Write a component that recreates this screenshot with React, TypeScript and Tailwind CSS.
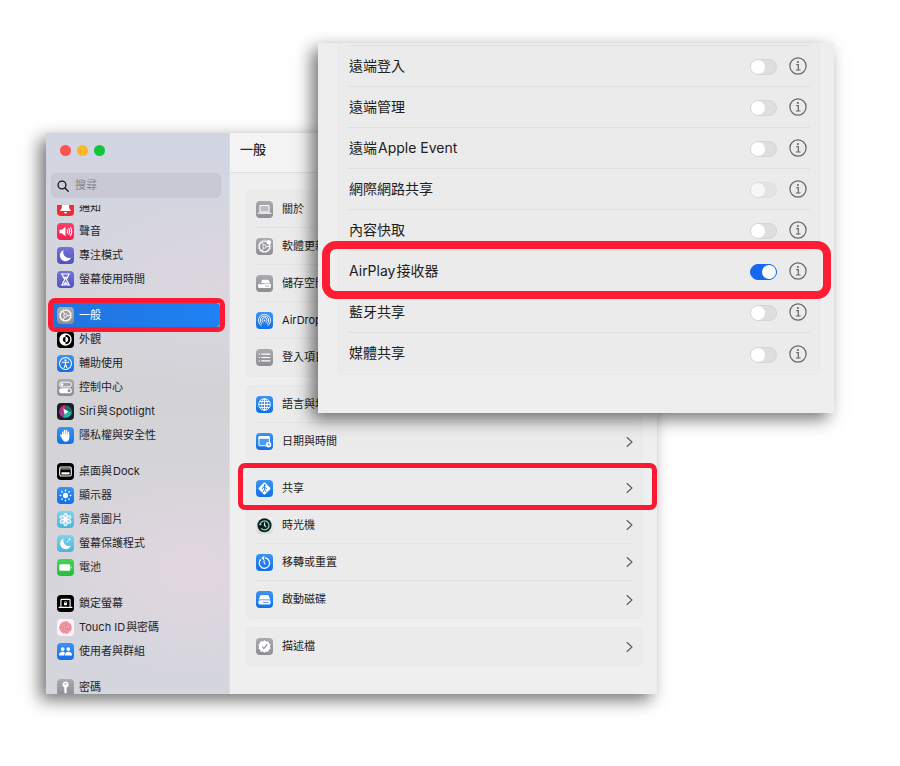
import { useState, type ReactNode } from "react";

type Item = { name: string; tile: string; art: ReactNode };

const BLUE = "bg-linear-to-b from-[#3b93f4] to-[#0f6fe6]";
const GRAY = "bg-linear-to-b from-[#ababaf] to-[#8e8e92]";
const BLACK = "bg-black";
const INDIGO = "bg-linear-to-b from-[#7573d8] to-[#5351bd]";
const SKY = "bg-linear-to-b from-[#7fd3ea] to-[#4bb4dc]";

const gear = (
  <g fill="none" stroke="#fff">
    <circle cx="10" cy="10" r="6.2" strokeWidth="1.4" />
    <circle cx="10" cy="10" r="7.4" strokeWidth="1" strokeDasharray="1 0.94" />
    <circle cx="10" cy="10" r="2" strokeWidth="1" />
    <path d="M12 10h4M9 8.3 7 4.8M9 11.7l-2 3.5" strokeWidth="1.1" />
  </g>
);

const sidebar: Item[][] = [
  [
    {
      name: "通知",
      tile: "bg-[#f02d33]",
      art: (
        <path fill="#fff" d="M10 3.500c-2.800 0-4.200 2-4.200 4.500 0 2.800-.6 4-2 5.300v.9h12.400v-.9c-1.400-1.300-2-2.500-2-5.300 0-2.500-1.400-4.500-4.200-4.500zM8.200 15.200a1.800 1.800 0 0 0 3.600 0z" />
      ),
    },
    {
      name: "聲音",
      tile: "bg-linear-to-b from-[#fb4069] to-[#ee1f50]",
      art: (
        <g>
          <path fill="#fff" d="M3 8v4h2.600L10 15.500v-11L5.600 8z" />
          <path fill="none" stroke="#fff" strokeWidth="1.200" strokeLinecap="round" d="M12 8q1.200 2 0 4M13.900 6.500q2.200 3.500 0 7M15.800 5q3 5 0 10" />
        </g>
      ),
    },
    {
      name: "專注模式",
      tile: INDIGO,
      art: <path fill="#fff" d="M8 3.500a6.800 6.800 0 1 0 8.600 8.800A6.600 6.600 0 0 1 8 3.500z" />,
    },
    {
      name: "螢幕使用時間",
      tile: INDIGO,
      art: (
        <g fill="none" stroke="#fff" strokeWidth="1.400" strokeLinecap="round">
          <path d="M5 3.500h10M5 16.500h10" />
          <path d="M6.300 3.500c0 3.500 2.600 4.500 2.600 6.500s-2.600 3-2.600 6.500M13.700 3.500c0 3.500-2.600 4.500-2.600 6.500s2.600 3 2.600 6.500" />
          <path d="M8 7h4l-2 2.500zM7.500 15.500 10 12.500l2.500 3z" fill="#fff" strokeWidth="0.500" />
        </g>
      ),
    },
  ],
  [
    { name: "一般", tile: GRAY, art: gear },
    {
      name: "外觀",
      tile: BLACK,
      art: (
        <g>
          <circle cx="10" cy="10" r="6.500" fill="none" stroke="#fff" strokeWidth="1.600" />
          <path fill="#fff" d="M10 3.500a6.500 6.500 0 0 0 0 13v-3.400a3.100 3.100 0 0 1 0-6.200z" />
          <path fill="#fff" d="M10 6.900a3.100 3.100 0 0 1 0 6.200z" />
        </g>
      ),
    },
    {
      name: "輔助使用",
      tile: BLUE,
      art: (
        <g fill="none" stroke="#fff" strokeLinecap="round">
          <circle cx="10" cy="10" r="7" strokeWidth="1.200" />
          <circle cx="10" cy="6.300" r="1.300" fill="#fff" stroke="none" />
          <path d="M6.400 8.600h7.200M10 8.600v2.600M10 11.200l-1.500 3.500M10 11.200l1.500 3.500" strokeWidth="1.300" />
        </g>
      ),
    },
    {
      name: "控制中心",
      tile: GRAY,
      art: (
        <g>
          <rect x="3" y="3.800" width="14" height="5.400" rx="2.700" fill="none" stroke="#fff" strokeWidth="1.100" />
          <circle cx="5.900" cy="6.500" r="1.600" fill="#fff" />
          <rect x="2.600" y="10.800" width="14.800" height="6" rx="3" fill="#fff" />
          <circle cx="14.200" cy="13.800" r="1.700" fill="#8e8e92" />
        </g>
      ),
    },
    {
      name: "Siri與Spotlight",
      tile: "bg-[#1c1c2c]",
      art: (
        <g>
          <path d="M10 2.500A7.500 7.500 0 0 0 2.800 8c2 .5 4 1 7.200 2z" fill="#c93468" />
          <path d="M2.800 8A7.500 7.500 0 0 0 7 16.800L10 10z" fill="#a83a94" />
          <path d="M10 2.500a7.500 7.500 0 0 1 7.500 7.500L10 10z" fill="#1f6f6c" />
          <path d="M17.500 10A7.500 7.500 0 0 1 7 16.800L10 10z" fill="#27b6a4" />
          <path d="M7.500 6.500 13.500 10l-4.500 3.500z" fill="#fff" />
        </g>
      ),
    },
    {
      name: "隱私權與安全性",
      tile: BLUE,
      art: (
        <g fill="none" stroke="#fff" strokeWidth="1.700" strokeLinecap="round">
          <path d="M6.700 10.500V6M8.900 9.500V4M11.200 9.500V4M13.400 10.500V6" />
          <path d="M4.300 9.500 6.800 13" />
          <path fill="#fff" strokeWidth="1" d="M6.200 9h7.800v3.500c0 3-1.600 4.300-3.700 4.300s-3-.8-4.100-3.300z" />
        </g>
      ),
    },
  ],
  [
    {
      name: "桌面與Dock",
      tile: BLACK,
      art: (
        <g>
          <rect x="3.200" y="4.700" width="13.600" height="10.600" rx="1.800" fill="none" stroke="#fff" strokeWidth="1.300" />
          <rect x="5.200" y="10.800" width="9.600" height="2.600" rx="0.600" fill="#fff" />
          <path d="M4 7h12" stroke="#fff" strokeWidth="0.900" />
        </g>
      ),
    },
    {
      name: "顯示器",
      tile: BLUE,
      art: (
        <g stroke="#fff" strokeWidth="1.700" strokeLinecap="round">
          <circle cx="10" cy="10" r="3.100" fill="#fff" stroke="none" />
          <path d="M10 3.800v.5M10 15.700v.5M3.800 10h.5M15.700 10h.5M5.600 5.600l.4.400M14 14l.4.400M5.600 14.400l.4-.4M14 6l.4-.4" />
        </g>
      ),
    },
    {
      name: "背景圖片",
      tile: SKY,
      art: (
        <g fill="#ffffff55" stroke="#fff" strokeWidth="1.200">
          <ellipse cx="10" cy="5.700" rx="1.900" ry="2.700" />
          <ellipse cx="10" cy="5.700" rx="1.900" ry="2.700" transform="rotate(60 10 10)" />
          <ellipse cx="10" cy="5.700" rx="1.900" ry="2.700" transform="rotate(120 10 10)" />
          <ellipse cx="10" cy="5.700" rx="1.900" ry="2.700" transform="rotate(180 10 10)" />
          <ellipse cx="10" cy="5.700" rx="1.900" ry="2.700" transform="rotate(240 10 10)" />
          <ellipse cx="10" cy="5.700" rx="1.900" ry="2.700" transform="rotate(300 10 10)" />
          <circle cx="10" cy="10" r="1.600" fill="#fff" />
        </g>
      ),
    },
    {
      name: "螢幕保護程式",
      tile: SKY,
      art: (
        <g fill="#fff">
          <path d="M8 4a6.500 6.500 0 1 0 8.300 8.400A6.300 6.300 0 0 1 8 4z" />
          <circle cx="14.600" cy="5.200" r="1.100" />
          <circle cx="12.400" cy="8" r="0.800" />
        </g>
      ),
    },
    {
      name: "電池",
      tile: "bg-linear-to-b from-[#45d35a] to-[#23bd3c]",
      art: (
        <g fill="#fff">
          <rect x="2.600" y="6.200" width="13" height="7.600" rx="1.800" />
          <path d="M16.400 8.300q1.700 1.700 0 3.400z" />
        </g>
      ),
    },
  ],
  [
    {
      name: "鎖定螢幕",
      tile: BLACK,
      art: (
        <g fill="none" stroke="#fff" strokeWidth="1.300">
          <path d="M4.600 13.800V6.200q0-1 1-1h8.800q1 0 1 1v7.600" />
          <path d="M2.500 14.600h15" strokeLinecap="round" />
          <rect x="8.300" y="9.200" width="3.400" height="2.800" fill="#fff" stroke="none" />
          <path d="M9 9.500V8.600a1 1 0 0 1 2 0v.9" strokeWidth="0.800" />
        </g>
      ),
    },
    {
      name: "Touch ID與密碼",
      tile: "bg-[#fbf3f4]",
      art: (
        <g fill="none" stroke="#e8697d" strokeWidth="0.900">
          <circle cx="10" cy="10" r="6.800" fill="#f2a3ae" strokeDasharray="5 1" />
          <circle cx="10" cy="10" r="4.800" strokeDasharray="6 1" />
          <circle cx="10" cy="10" r="2.800" strokeDasharray="4 1" />
          <path d="M10 8.500v3.500" />
        </g>
      ),
    },
    {
      name: "使用者與群組",
      tile: BLUE,
      art: (
        <g fill="#fff">
          <circle cx="6.700" cy="7.200" r="2.200" />
          <circle cx="13.300" cy="7.200" r="2.200" />
          <path d="M2.300 14.600c0-3 1.800-4.400 4.200-4.400 1.400 0 2.400.5 3 1.400-.7.900-1 1.900-1 3z" />
          <path d="M9.300 14.600c0-3 1.700-4.400 4.100-4.400s4.300 1.400 4.300 4.400z" />
        </g>
      ),
    },
  ],
  [
    {
      name: "密碼",
      tile: GRAY,
      art: (
        <g>
          <path fill="#fff" d="M10 3a3.700 3.700 0 0 0-1.400 7.100v5.400L10 17.300l1.900-1.900-1.200-1.200 1.200-1.200-.9-1.200.5-1.700A3.700 3.700 0 0 0 10 3z" />
          <circle cx="10" cy="5.600" r="1" fill="#97979b" />
        </g>
      ),
    },
  ],
];

const general: Item[][] = [
  [
    {
      name: "關於",
      tile: GRAY,
      art: (
        <g>
          <rect x="4.600" y="5.200" width="10.800" height="7.800" rx="1" fill="#bdbdc1" stroke="#fff" strokeWidth="1.200" />
          <path d="M2.500 14.300h15" stroke="#fff" strokeWidth="1.300" strokeLinecap="round" />
        </g>
      ),
    },
    {
      name: "軟體更新",
      tile: GRAY,
      art: (
        <g>
          {gear}
          <circle cx="15" cy="5" r="2.600" fill="#fff" />
        </g>
      ),
    },
    {
      name: "儲存空間",
      tile: GRAY,
      art: (
        <g>
          <path fill="#fff" d="M7.200 5.500h6.600q1 0 1.400 1L16.500 9.600H6L7.200 5.500z" />
          <rect x="2.400" y="10.200" width="15.200" height="5.200" rx="1.500" fill="#fff" />
          <path d="M11 13h4.500M3 10.200h6" stroke="#97979b" strokeWidth="1" />
        </g>
      ),
    },
    {
      name: "AirDrop",
      tile: BLUE,
      art: (
        <g fill="none" stroke="#fff" strokeWidth="1.100" strokeLinecap="round">
          <path d="M6 16a7.200 7.200 0 1 1 8 0M7 13.900a5 5 0 1 1 6 0M8.300 12a2.900 2.900 0 1 1 3.400 0" />
          <circle cx="10" cy="9.800" r="1" fill="#fff" stroke="none" />
        </g>
      ),
    },
    {
      name: "登入項目",
      tile: GRAY,
      art: <path fill="none" stroke="#fff" strokeWidth="1.400" strokeLinecap="round" d="M3.800 6h.2M3.800 10h.2M3.800 14h.2M6.800 6h9.500M6.800 10h9.500M6.800 14h9.500" />,
    },
  ],
  [
    {
      name: "語言與地區",
      tile: BLUE,
      art: (
        <g fill="none" stroke="#fff" strokeWidth="1.100">
          <circle cx="10" cy="10" r="6.800" />
          <ellipse cx="10" cy="10" rx="3.200" ry="6.800" />
          <path d="M10 3.200v13.600M3.200 10h13.600M4.300 6.500h11.400M4.300 13.500h11.400" />
        </g>
      ),
    },
    {
      name: "日期與時間",
      tile: BLUE,
      art: (
        <g>
          <rect x="3.400" y="4.200" width="12.400" height="10.800" rx="1.600" fill="#4c9cf5" stroke="#fff" strokeWidth="1.200" />
          <path fill="#fff" d="M3.200 4.200h12.800v2.600H3.200z" />
          <circle cx="14.800" cy="13.800" r="3.200" fill="#fff" />
          <path d="M14.800 12v1.900h1.500" fill="none" stroke="#1877e9" strokeWidth="0.900" />
        </g>
      ),
    },
  ],
  [
    {
      name: "共享",
      tile: BLUE,
      art: (
        <g>
          <rect x="4.600" y="4.600" width="10.800" height="10.800" rx="1.400" transform="rotate(45 10 10)" fill="#fff" />
          <circle cx="10.300" cy="6.200" r="1.100" fill="#1877e9" />
          <path d="M10 8v3l1.800 3M10 11l-1.800 3M7.700 10.300 8.300 8.500 10 8l1.300 1.500 1.300.5" fill="none" stroke="#1877e9" strokeWidth="1.100" strokeLinecap="round" />
        </g>
      ),
    },
    {
      name: "時光機",
      tile: "bg-linear-to-b from-[#f1f1f1] to-[#dadada]",
      art: (
        <g fill="none">
          <circle cx="10" cy="9.700" r="8.300" fill="#10201f" />
          <path d="M4.900 8.500A5.300 5.300 0 1 1 6 13.300" stroke="#7fd0bb" strokeWidth="1.500" />
          <path d="M3 7.800l1.800 2.300L7 8.200z" fill="#7fd0bb" />
          <path d="M10 6.400v3.500l2 1.800" stroke="#d9f5ec" strokeWidth="1.300" />
        </g>
      ),
    },
    {
      name: "移轉或重置",
      tile: BLUE,
      art: (
        <g fill="none" stroke="#fff" strokeWidth="1.500" strokeLinecap="round" strokeLinejoin="round">
          <path d="M5.200 6.800A6.100 6.100 0 1 0 11 4.700" />
          <path d="M9.500 3 6.800 4.600 9.300 7" fill="#fff" strokeWidth="1" />
          <path d="M9.500 8v2.500l1.200 1.300" strokeWidth="1.200" />
        </g>
      ),
    },
    {
      name: "啟動磁碟",
      tile: BLUE,
      art: (
        <g fill="#fff">
          <path d="M6.400 4.800h7.200q1.100 0 1.600 1.100l1.600 4.200H3.200l1.600-4.200q.5-1.100 1.600-1.100z" />
          <rect x="2.800" y="11" width="14.400" height="4.800" rx="1.600" />
          <path d="M8 13.400h7" stroke="#3a8ff0" strokeWidth="1" />
        </g>
      ),
    },
  ],
  [
    {
      name: "描述檔",
      tile: GRAY,
      art: (
        <g>
          <path fill="#fff" d="m10 2.600 2 1.400 2.500-.1.700 2.300 2 1.500-.8 2.300.8 2.300-2 1.500-.7 2.300-2.500-.1-2 1.400-2-1.400-2.500.1-.7-2.300-2-1.500.8-2.300-.8-2.300 2-1.500.7-2.300L8 4z" />
          <path d="m7.300 10.300 2 2.200 3.600-5" fill="none" stroke="#8e8e92" strokeWidth="1.200" strokeLinecap="round" />
        </g>
      ),
    },
  ],
];

const services = [
  "遠端登入",
  "遠端管理",
  "遠端Apple Event",
  "網際網路共享",
  "內容快取",
  "AirPlay接收器",
  "藍牙共享",
  "媒體共享",
];

function Tile({ item }: { item: Item }) {
  return (
    <span className={`size-[17px] shrink-0 overflow-hidden rounded-[4px] ${item.tile}`}>
      <svg viewBox="0 0 20 20" className="block size-full" aria-hidden="true">
        {item.art}
      </svg>
    </span>
  );
}

/* Keeps a hair of space where Latin and Chinese text meet. */
function Label({ text }: { text: string }) {
  const parts = text.match(/[A-Za-z ]+|[^A-Za-z ]+/g) ?? [];
  return (
    <span className="flex gap-px whitespace-pre">
      {parts.map((part) => (
        <span key={part}>{part}</span>
      ))}
    </span>
  );
}

function Sidebar() {
  const [query, setQuery] = useState("");
  return (
    <aside className="flex w-[184px] shrink-0 flex-col border-r border-[#dcdce2] bg-[radial-gradient(ellipse_130px_100px_at_80%_78%,#e2d7e0_0%,transparent_100%),radial-gradient(ellipse_140px_90px_at_90%_28%,#dcd6df_0%,transparent_100%),linear-gradient(to_bottom,#d1d5e2_0%,#d5d5de_22%,#d3d3d6_48%,#d7d5db_75%,#d5d5df_100%)] px-[5px]">
      <div className="flex h-10 items-center gap-1.5 px-[9px] pb-1.5">
        <button aria-label="關閉" className="size-[11px] rounded-full bg-[#fb5350]" />
        <button aria-label="最小化" className="size-[11px] rounded-full bg-[#fdb725]" />
        <button aria-label="放大" className="size-[11px] rounded-full bg-[#14c339]" />
      </div>
      <label className="mr-[3px] flex h-[25px] shrink-0 items-center gap-1.5 rounded-[5px] border border-[#c6c7d2] bg-[#c8c9d4] px-[5px]">
        <svg viewBox="0 0 12 12" className="size-3 shrink-0" fill="none" stroke="#151518" strokeWidth="1.3" strokeLinecap="round" aria-hidden="true">
          <circle cx="5" cy="5" r="3.900" />
          <path d="m8 8 3.200 3.200" />
        </svg>
        <input
          aria-label="搜尋"
          value={query}
          onChange={(e) => setQuery(e.target.value)}
          placeholder="搜尋"
          className="w-full min-w-0 bg-transparent text-[11px] outline-none placeholder:text-[#85858f]"
        />
      </label>
      <nav className="-mx-[5px] mt-[7px] min-h-0 grow basis-0 overflow-hidden px-[5px]">
        <div className="-mt-2.5 flex flex-col gap-3">
          {sidebar.map((group) => (
            <ul key={group[0].name}>
              {group.map((item) => {
                const active = item.name === "一般";
                return (
                  <li key={item.name} className={active ? "relative z-10" : ""}>
                    <a
                      href="#"
                      className={`mr-1 flex h-6 items-center gap-[5px] px-1.5 text-[11px] ${
                        active ? "rounded-[4px] bg-linear-to-r from-[#2273dc] to-[#1d82f5] text-white" : "text-[#242428]"
                      }`}
                    >
                      <Tile item={item} />
                      <Label text={item.name} />
                    </a>
                    {active && (
                      <span className="pointer-events-none absolute -inset-y-[5px] -right-px -left-[3px] rounded-[7px] border-5 border-[#fb1a31]" />
                    )}
                  </li>
                );
              })}
            </ul>
          ))}
        </div>
      </nav>
    </aside>
  );
}

function GeneralPane() {
  return (
    <section className="min-w-0 grow">
      <header className="flex h-10 items-center border-b border-[#dfdfdf] bg-[#f4f4f4] px-2.5 pb-1.5">
        <h1 className="text-[13px] font-medium text-[#262626]">一般</h1>
      </header>
      <div className="flex flex-col gap-2 pt-[17px] pr-3.5 pb-7 pl-4">
        {general.map((group) => (
          <ul key={group[0].name} className="divide-y divide-[#e3e3e3] rounded-[5px] border border-[#e9e9e9] bg-[#ebebeb] px-[9px]">
            {group.map((item) => (
              <li key={item.name} className="relative h-[37px]">
                <a href="#" className="flex h-full items-center gap-[9px] text-[11px] text-[#1a1a1a]">
                  <Tile item={item} />
                  <Label text={item.name} />
                  <svg viewBox="0 0 7 12" className="ml-auto h-3 w-[7px]" fill="none" stroke="#5c5c5c" strokeWidth="1.100" strokeLinecap="round" strokeLinejoin="round" aria-hidden="true">
                    <path d="M1 1.500 6 6l-5 4.500" />
                  </svg>
                </a>
                {item.name === "共享" && (
                  <span className="pointer-events-none absolute -top-[7px] -right-6 -bottom-[4px] -left-[18px] rounded-[7px] border-5 border-[#fb1a31]" />
                )}
              </li>
            ))}
          </ul>
        ))}
      </div>
    </section>
  );
}

function SharingPanel() {
  const [on, setOn] = useState<string[]>(["AirPlay接收器"]);
  const flip = (name: string) =>
    setOn(on.includes(name) ? on.filter((n) => n !== name) : [...on, name]);
  return (
    <section
      aria-label="共享"
      className="absolute top-[43px] right-[66px] left-[318px] bg-[#eeeeee] pr-3.5 pb-[38px] pl-5 shadow-[-6px_6px_16px_rgba(0,0,0,0.55)]"
    >
      <ul className="divide-y divide-[#e0e0e0] rounded-b-[5px] border-x border-b border-[#e8e8e8] bg-[#ebebeb] px-[9px] pt-[3px]">
        {services.map((name, i) => (
          <li key={name} className={`relative flex h-[41px] items-center ${i === 0 ? "shadow-[0_-1px_0_#e2e2e2]" : ""}`}>
            <label htmlFor={`service-${i}`} className="grow pb-0.5 pl-px text-[14px] text-[#202020]">
              <Label text={name} />
            </label>
            <input
              id={`service-${i}`}
              type="checkbox"
              role="switch"
              checked={on.includes(name)}
              onChange={() => flip(name)}
              className={`mt-0.5 h-4 w-[27px] shrink-0 appearance-none rounded-full border border-[#d5d5d5] bg-[#dedede] before:block before:size-3.5 before:rounded-full before:bg-white checked:border-[#1668ee] checked:bg-[#1668ee] checked:before:ml-[11px] ${
                name === "網際網路共享" ? "opacity-60" : ""
              }`}
            />
            <button aria-label={`${name} 資訊`} className="mr-[3px] ml-3 shrink-0">
              <svg viewBox="0 0 18 18" className="block size-[18px]" fill="none" stroke="#666" strokeWidth="1.200" aria-hidden="true">
                <circle cx="9" cy="9" r="8.100" />
                <circle cx="8.900" cy="5" r="0.900" fill="#555" stroke="none" />
                <path d="M7.300 7.700h2v5.100M6.900 13h4.600" />
              </svg>
            </button>
            {name === "AirPlay接收器" && (
              <span className="pointer-events-none absolute -top-2.5 -right-[21px] -bottom-2 -left-[26px] z-10 rounded-[14px] border-8 border-[#ff1d33]" />
            )}
          </li>
        ))}
      </ul>
    </section>
  );
}

export default function App() {
  return (
    <main
      lang="zh-Hant"
      className="relative min-h-screen min-w-[720px] overflow-hidden bg-white pt-[133px] pr-[243px] pb-[72px] pl-[46px] font-[Inter,'Noto_Sans_CJK_TC',sans-serif]"
    >
      <div className="flex bg-[#efefef] shadow-[-6px_6px_16px_rgba(0,0,0,0.55)]">
        <Sidebar />
        <GeneralPane />
      </div>
      <SharingPanel />
    </main>
  );
}
